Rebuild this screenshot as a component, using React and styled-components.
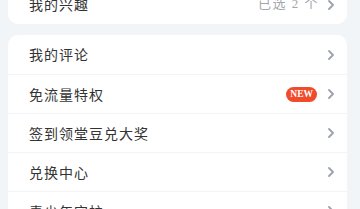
import React from "react";
import styled, { createGlobalStyle } from "styled-components";

const Global = createGlobalStyle`
  html, body {
    margin: 0;
    padding: 0;
    background: #f2f5f8;
  }
  body {
    font-family: "Noto Sans CJK SC", sans-serif;
    overflow: hidden;
  }
`

const Page = styled.div`
  width: 360px;
  height: 209px;
  overflow: hidden;
  background: #f2f5f8;
`

const Scroll = styled.div`
  display: flex;
  flex-direction: column;
  gap: 11px;
  padding: 0 13px 0 8px;
  margin-top: -15px;
`

const Card = styled.div`
  background: #ffffff;
  border-radius: 10px;
  display: flex;
  flex-direction: column;
`

const Row = styled.div`
  height: 39px;
  display: flex;
  align-items: center;
  padding: 0 13px 0 21px;
  border-top: ${p => (p.first ? "none" : "1px solid #f2f4f7")};
  box-sizing: border-box;
`

const Label = styled.span`
  flex: 1;
  font-size: 14px;
  line-height: 18px;
  color: #333333;
  letter-spacing: 1px;
  margin-top: -1px;
`

const Value = styled.span`
  font-family: "Liberation Serif", "Noto Sans CJK SC", serif;
  font-size: 13px;
  line-height: 18px;
  color: #a3a7ad;
  letter-spacing: 1.5px;
  margin-right: 9px;
  margin-top: -1px;
`

const Badge = styled.span`
  background: #f04b2a;
  color: #ffffff;
  font-family: "Liberation Serif", serif;
  font-weight: bold;
  font-size: 9.5px;
  height: 15px;
  line-height: 15px;
  padding: 0 4px;
  border-radius: 8px;
  margin-right: 11px;
`

const Chevron = () => (
  <svg width="6" height="10" viewBox="0 0 6 10">
    <path d="M1 1 L5 5 L1 9" fill="none" stroke="#9ba1ad" strokeWidth="1.8" strokeLinecap="round" strokeLinejoin="round" />
  </svg>
)

const items = [
  { label: "我的评论" },
  { label: "免流量特权", badge: "NEW" },
  { label: "签到领堂豆兑大奖" },
  { label: "兑换中心" },
  { label: "青少年守护" },
]

const App = () => {
  return (
    <Page>
      <Global />
      <Scroll>
        <Card>
          <Row first>
            <Label>我的兴趣</Label>
            <Value>已选 2 个</Value>
            <Chevron />
          </Row>
        </Card>
        <Card>
          {items.map((it, i) => (
            <Row key={it.label} first={i === 0}>
              <Label>{it.label}</Label>
              {it.badge && <Badge>{it.badge}</Badge>}
              <Chevron />
            </Row>
          ))}
        </Card>
      </Scroll>
    </Page>
  )
}

export default App;
